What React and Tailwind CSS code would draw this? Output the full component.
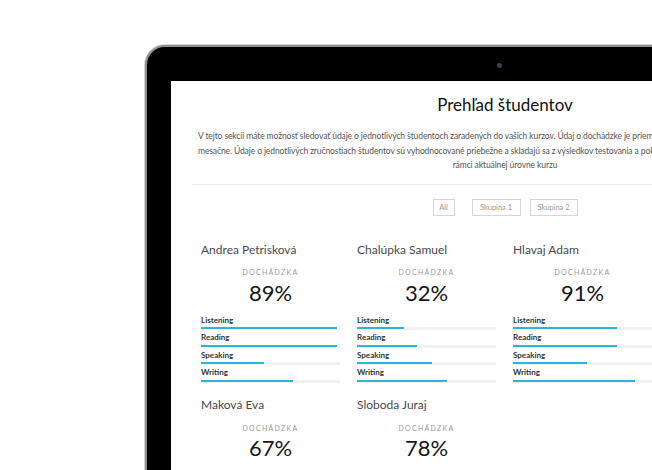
import React from 'react';

const SKILLS = ['Listening', 'Reading', 'Speaking', 'Writing'];

const STUDENTS = [
  { name: 'Andrea Petrisková', attendance: 89, skills: [98, 98, 45, 66] },
  { name: 'Chalúpka Samuel', attendance: 32, skills: [34, 43, 54, 65] },
  { name: 'Hlavaj Adam', attendance: 91, skills: [75, 75, 53, 88] },
  { name: 'Kováčová Lucia', attendance: 74, skills: [62, 70, 48, 81] },
  { name: 'Maková Eva', attendance: 67, skills: [58, 71, 40, 63] },
  { name: 'Sloboda Juraj', attendance: 78, skills: [80, 66, 59, 72] },
];

const FONT = "font-['Lato','Open_Sans',sans-serif]";

const StudentCard = ({ student }) => (
  <div className="flex flex-col">
    <div className="text-[12px] leading-4 text-[#4a4a4a] whitespace-nowrap">{student.name}</div>
    <div className="mt-[9.5px] text-center text-[7px] leading-[10px] tracking-[1.3px] text-[#9a9a9a]">DOCHÁDZKA</div>
    <div className="mt-[3.5px] text-center text-[22px] leading-6 text-[#151515]">{student.attendance}%</div>
    <div className="mt-[10px] flex flex-col gap-[2px]">
      {SKILLS.map((skill, i) => (
        <div key={skill}>
          <div className="text-[8px] leading-[11px] font-bold text-[#333]">{skill}</div>
          <div className="mt-[1.5px] h-[3px] bg-[#f1f1f1]">
            <div className="h-[2px] bg-[#2cb5d9]" style={{ width: `${student.skills[i]}%` }} />
          </div>
        </div>
      ))}
    </div>
  </div>
);

const FilterButton = ({ children, className }) => (
  <button className={`h-[17px] border border-[#d6d6d6] bg-white text-[7.5px] text-[#999] ${className}`}>
    {children}
  </button>
);

export default function App() {
  return (
    <div className={`w-[652px] h-[470px] overflow-hidden bg-white pl-[145px] pt-[45px] ${FONT}`}>
      <div className="w-[720px] h-[620px] rounded-tl-[20px] bg-black border-2 border-[#8f8f8f] shadow-[0_0_0_1px_#d2d2d2] pl-[24px]">
        <div className="h-[34px] pl-[325.5px] pt-[15.5px]">
          <div className="w-[5px] h-[5px] rounded-full bg-[#3f4455]" />
        </div>

        <div className="w-[668px] h-[600px] bg-white">
          <div className="w-[626px] mx-auto pt-[14px]">
            <h1 className="text-center text-[17px] leading-5 text-[#111]">Prehľad študentov</h1>

            <div className="mt-[14px] w-[614px] mx-auto text-[8.5px] leading-[14.5px] tracking-[-0.1px] text-[#555]">
              <div className="whitespace-nowrap">
                V tejto sekcii máte možnosť sledovať údaje o jednotlivých študentoch zaradených do vašich kurzov. Údaj o dochádzke je priemerovaný a aktualizuje sa
              </div>
              <div className="whitespace-nowrap">
                mesačne. Údaje o jednotlivých zručnostiach študentov sú vyhodnocované priebežne a skladajú sa z výsledkov testovania a pokroku v
              </div>
              <div className="text-center">rámci aktuálnej úrovne kurzu</div>
            </div>

            <div className="mt-[11.5px] h-px bg-[#efefef]" />

            <div className="mt-[14px] flex justify-center">
              <FilterButton className="w-[22px]">All</FilterButton>
              <FilterButton className="ml-[17px] w-[49px]">Skupina 1</FilterButton>
              <FilterButton className="ml-[9px] w-[48px]">Skupina 2</FilterButton>
            </div>

            <div className="mt-[25.5px] pl-[9px] grid grid-cols-[repeat(4,139px)] gap-x-[17px] gap-y-[14.5px]">
              {STUDENTS.map((s) => (
                <StudentCard key={s.name} student={s} />
              ))}
            </div>
          </div>
        </div>
      </div>
    </div>
  );
}
